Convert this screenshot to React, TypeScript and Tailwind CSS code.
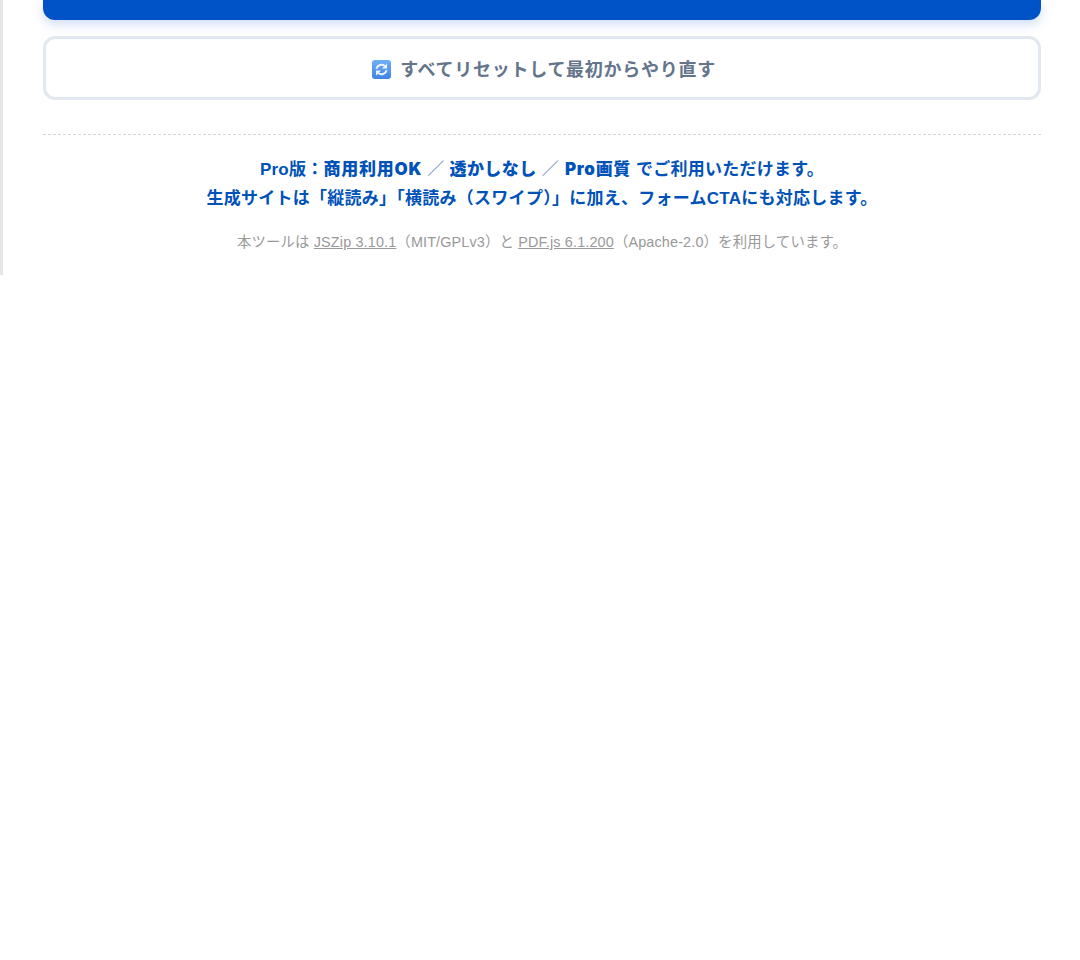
const FONT = "font-['Liberation_Sans','Noto_Sans_CJK_JP',sans-serif]";
const STRONG = "font-['Inter','Noto_Sans_CJK_JP',sans-serif] font-black";

function ResetIcon() {
  return (
    <svg width="19" height="19" viewBox="0 0 19 19" className="shrink-0 mt-[2px]">
      <defs>
        <linearGradient id="resetBg" x1="0" y1="0" x2="0" y2="1">
          <stop offset="0" stopColor="#6fb0f5" />
          <stop offset="1" stopColor="#3f83e6" />
        </linearGradient>
      </defs>
      <rect x="0" y="0" width="19" height="19" rx="3" fill="url(#resetBg)" />
      <path d="M4.4 8.8a5.2 5.2 0 0 1 8.4-2.9" fill="none" stroke="#eef5fd" strokeWidth="2" />
      <path d="M15 3.4v5h-5z" fill="#eef5fd" />
      <path d="M14.6 10.2a5.2 5.2 0 0 1-8.4 2.9" fill="none" stroke="#eef5fd" strokeWidth="2" />
      <path d="M4 15.6v-5h5z" fill="#eef5fd" />
    </svg>
  );
}

export default function App() {
  return (
    <div className={`${FONT} min-h-[960px] bg-white`}>
      <div className="border-l-[3px] border-[#e6e6e6] pl-10 pr-[39px] h-[275px]">
        <div className="h-5 bg-[#0052c7] rounded-b-xl shadow-[0_4px_12px_rgba(0,82,204,0.2)]" />
        <button className="mt-4 w-full h-16 flex items-center justify-center gap-[9px] pl-1 bg-white border-[3px] border-[#e2e8f0] rounded-xl text-[#64748b] text-lg font-bold tracking-[0.72px]">
          <ResetIcon />
          <span className="pt-[3px]">すべてリセットして最初からやり直す</span>
        </button>
        <div className="mt-[34px] border-t border-dashed border-[#d4d4d4] pt-5 text-center">
          <p className="text-[#0052b8] text-[17px] font-bold leading-[29px] tracking-[0.26px]">
            Pro版：<strong className={`${STRONG} tracking-[0.76px]`}>商用利用OK</strong>
            <span className="font-normal text-[#5f86c0] mx-[5px]">／</span>
            <strong className={`${STRONG} tracking-[0.46px]`}>透かしなし</strong>
            <span className="font-normal text-[#5f86c0] ml-[5px] mr-[6px]">／</span>
            <strong className={`${STRONG} tracking-[0.66px]`}>Pro画質</strong> でご利用いただけます。
            <br />
            生成サイトは「縦読み」「横読み（スワイプ）」に加え、フォームCTAにも対応します。
          </p>
          <p className="mt-[19px] text-[#999999] text-[14.4px] leading-[21px] tracking-[0.15px]">
            本ツールは <a className="underline">JSZip 3.10.1</a>（MIT/GPLv3）と <a className="underline">PDF.js 6.1.200</a>（Apache-2.0）を利用しています。
          </p>
        </div>
      </div>
    </div>
  );
}
